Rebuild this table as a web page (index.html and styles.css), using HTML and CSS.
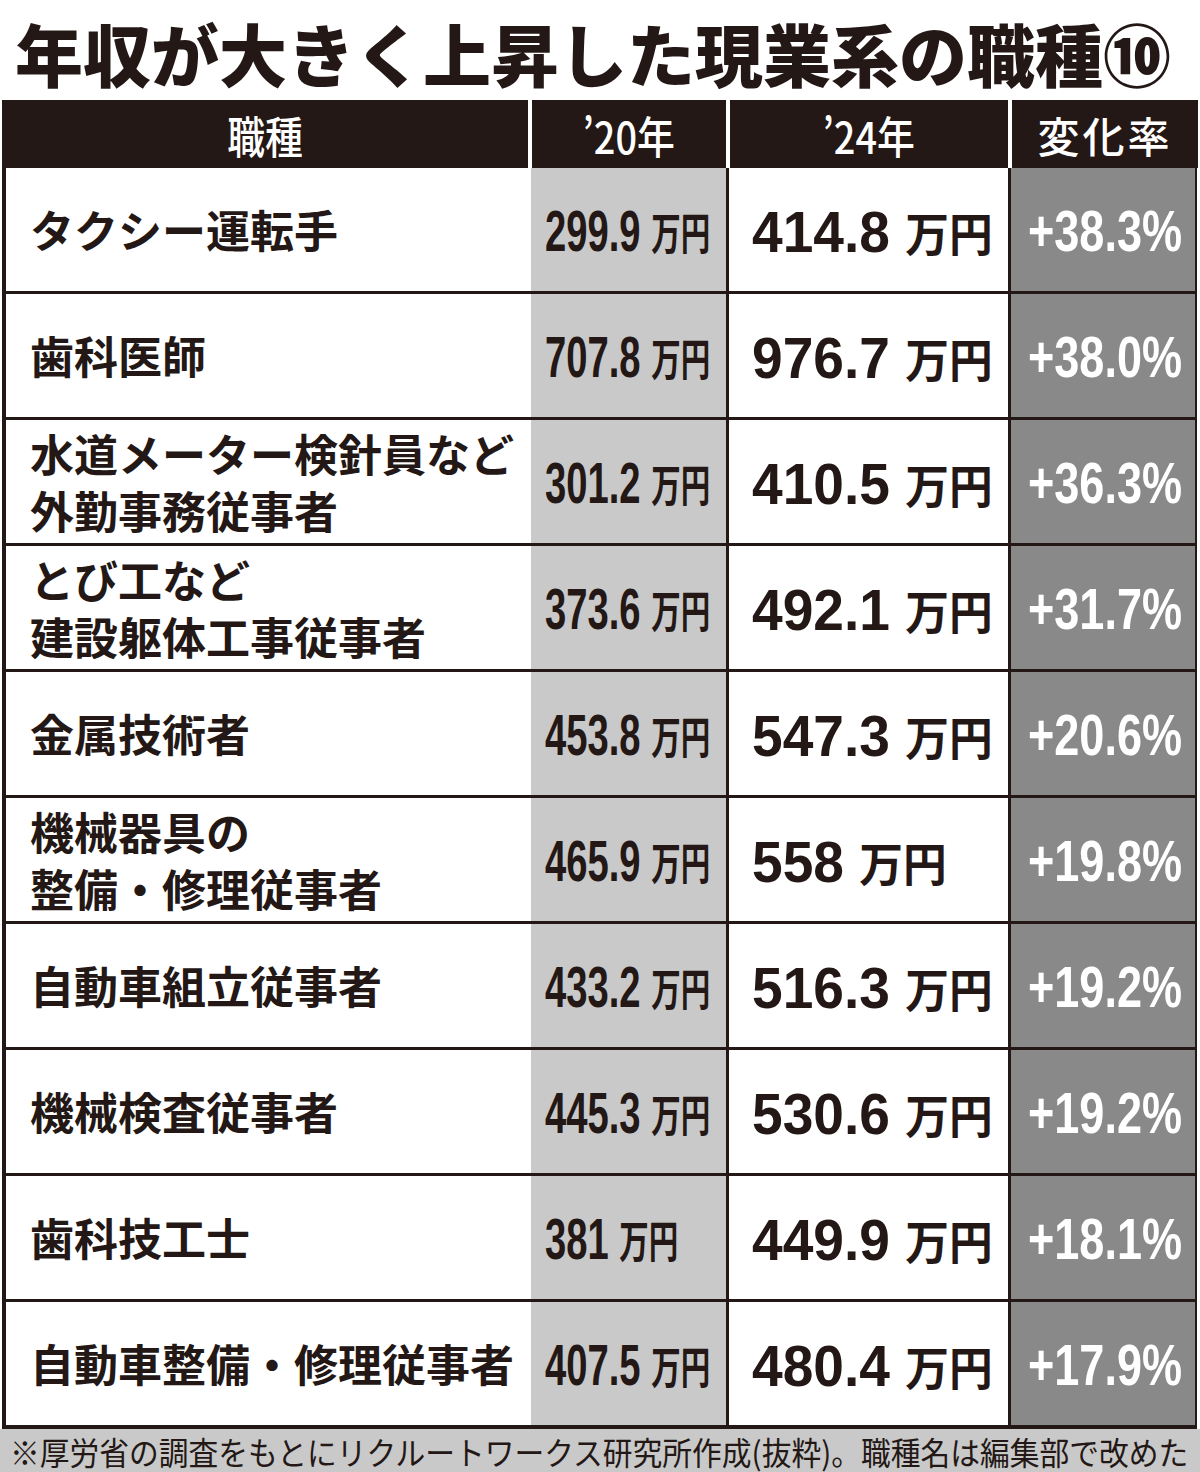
FILE: index.html
```html
<!DOCTYPE html>
<html lang="ja">
<head>
<meta charset="utf-8">
<title>年収が大きく上昇した現業系の職種⑩</title>
<link rel="stylesheet" href="styles.css">
</head>
<body>
<div class="page">
  <h1 class="title">年収が大きく上昇した現業系の職種⑩</h1>
  <div class="thead">
    <div class="th"><span class="sq">職種</span></div>
    <div class="th"><span class="sq">’20年</span></div>
    <div class="th"><span class="sq">’24年</span></div>
    <div class="th"><span class="sq wide">変化率</span></div>
  </div>
  <div class="tbody">
    <div class="row">
      <div class="c name"><span class="ln">タクシー運転手</span></div>
      <div class="c v20"><span class="s20">299.9 <span class="u">万円</span></span></div>
      <div class="c v24"><span class="s24">414.8 <span class="u">万円</span></span></div>
      <div class="c pct"><span class="sp">+38.3%</span></div>
    </div>
    <div class="row">
      <div class="c name"><span class="ln">歯科医師</span></div>
      <div class="c v20"><span class="s20">707.8 <span class="u">万円</span></span></div>
      <div class="c v24"><span class="s24">976.7 <span class="u">万円</span></span></div>
      <div class="c pct"><span class="sp">+38.0%</span></div>
    </div>
    <div class="row">
      <div class="c name"><span class="ln">水道メーター検針員など</span><span class="ln">外勤事務従事者</span></div>
      <div class="c v20"><span class="s20">301.2 <span class="u">万円</span></span></div>
      <div class="c v24"><span class="s24">410.5 <span class="u">万円</span></span></div>
      <div class="c pct"><span class="sp">+36.3%</span></div>
    </div>
    <div class="row">
      <div class="c name"><span class="ln">とび工など</span><span class="ln">建設躯体工事従事者</span></div>
      <div class="c v20"><span class="s20">373.6 <span class="u">万円</span></span></div>
      <div class="c v24"><span class="s24">492.1 <span class="u">万円</span></span></div>
      <div class="c pct"><span class="sp">+31.7%</span></div>
    </div>
    <div class="row">
      <div class="c name"><span class="ln">金属技術者</span></div>
      <div class="c v20"><span class="s20">453.8 <span class="u">万円</span></span></div>
      <div class="c v24"><span class="s24">547.3 <span class="u">万円</span></span></div>
      <div class="c pct"><span class="sp">+20.6%</span></div>
    </div>
    <div class="row">
      <div class="c name"><span class="ln">機械器具の</span><span class="ln">整備・修理従事者</span></div>
      <div class="c v20"><span class="s20">465.9 <span class="u">万円</span></span></div>
      <div class="c v24"><span class="s24">558 <span class="u">万円</span></span></div>
      <div class="c pct"><span class="sp">+19.8%</span></div>
    </div>
    <div class="row">
      <div class="c name"><span class="ln">自動車組立従事者</span></div>
      <div class="c v20"><span class="s20">433.2 <span class="u">万円</span></span></div>
      <div class="c v24"><span class="s24">516.3 <span class="u">万円</span></span></div>
      <div class="c pct"><span class="sp">+19.2%</span></div>
    </div>
    <div class="row">
      <div class="c name"><span class="ln">機械検査従事者</span></div>
      <div class="c v20"><span class="s20">445.3 <span class="u">万円</span></span></div>
      <div class="c v24"><span class="s24">530.6 <span class="u">万円</span></span></div>
      <div class="c pct"><span class="sp">+19.2%</span></div>
    </div>
    <div class="row">
      <div class="c name"><span class="ln">歯科技工士</span></div>
      <div class="c v20"><span class="s20">381 <span class="u">万円</span></span></div>
      <div class="c v24"><span class="s24">449.9 <span class="u">万円</span></span></div>
      <div class="c pct"><span class="sp">+18.1%</span></div>
    </div>
    <div class="row">
      <div class="c name"><span class="ln">自動車整備・修理従事者</span></div>
      <div class="c v20"><span class="s20">407.5 <span class="u">万円</span></span></div>
      <div class="c v24"><span class="s24">480.4 <span class="u">万円</span></span></div>
      <div class="c pct"><span class="sp">+17.9%</span></div>
    </div>
  </div>
  <div class="foot"><span class="ft">※厚労省の調査をもとにリクルートワークス研究所作成(抜粋)。職種名は編集部で改めた</span></div>
</div>
</body>
</html>
```
FILE: styles.css
```css
* { box-sizing: border-box; }
html, body {
  margin: 0;
  padding: 0;
  background: #ffffff;
}
body {
  font-family: "Noto Sans CJK JP", "Liberation Sans", sans-serif;
  color: #231815;
}
.page {
  width: 1200px;
  height: 1472px;
  overflow: hidden;
  display: flex;
  flex-direction: column;
}
.title {
  margin: 0;
  height: 100px;
  padding: 8px 0 0 15px;
  font-size: 68px;
  line-height: 90px;
  font-weight: 900;
  letter-spacing: 0;
  white-space: nowrap;
  color: #231815;
}
.thead {
  display: grid;
  grid-template-columns: 526px 194px 278px 186px;
  column-gap: 4px;
  margin-left: 2px;
  height: 68px;
}
.th {
  background: #231815;
  color: #ffffff;
  display: flex;
  align-items: center;
  justify-content: center;
  font-size: 44px;
  font-weight: 500;
  overflow: hidden;
}
.sq {
  display: inline-block;
  transform: scaleX(0.86);
  line-height: 1;
  margin-top: 2px;
}
.sq.wide {
  transform: none;
  font-size: 42px;
  letter-spacing: 3px;
}
.tbody {
  margin-left: 2px;
  width: 1195px;
  border-left: 4px solid #231815;
  border-right: 2px solid #231815;
  border-bottom: 4px solid #231815;
  display: flex;
  flex-direction: column;
}
.row {
  display: grid;
  grid-template-columns: 525px 195px 282px 187px;
  height: 126px;
  border-bottom: 3px solid #231815;
}
.row:last-child {
  height: 123px;
  border-bottom: none;
}
.c {
  display: flex;
  align-items: center;
  overflow: hidden;
  white-space: nowrap;
}
.name {
  flex-direction: column;
  align-items: flex-start;
  justify-content: center;
  padding-left: 24px;
  font-size: 44px;
  font-weight: 700;
  background: #ffffff;
}
.ln {
  display: block;
  height: 57px;
  line-height: 57px;
}
.v20 {
  background: #c9c9c9;
  padding-left: 14px;
}
.v24 {
  background: #ffffff;
  border-left: 3px solid #231815;
  padding-left: 23px;
}
.pct {
  background: #898989;
  border-left: 3px solid #231815;
  padding-left: 17px;
}
.s20, .s24, .sp {
  display: inline-block;
  transform-origin: left center;
  font-family: "Liberation Sans", "Noto Sans CJK JP", sans-serif;
  font-weight: 700;
  line-height: 1;
  white-space: nowrap;
  margin-top: 4px;
}
.s20 {
  font-size: 57px;
  transform: scaleX(0.67);
}
.s24 {
  font-size: 58px;
  transform: scaleX(0.95);
}
.sp {
  font-size: 57px;
  color: #ffffff;
  transform: scaleX(0.79);
}
.u {
  font-family: "Noto Sans CJK JP", sans-serif;
  font-weight: 700;
  font-size: 44px;
  vertical-align: 1px;
}
.s24 .u {
  font-size: 46px;
}
.foot {
  flex: 1;
  background: #c9c9c9;
  padding-left: 10px;
  display: flex;
  align-items: center;
  white-space: nowrap;
  overflow: hidden;
}
.ft {
  display: inline-block;
  font-size: 32px;
  font-weight: 400;
  line-height: 1;
  color: #231815;
  transform: scaleX(0.93);
  transform-origin: left center;
}
```
